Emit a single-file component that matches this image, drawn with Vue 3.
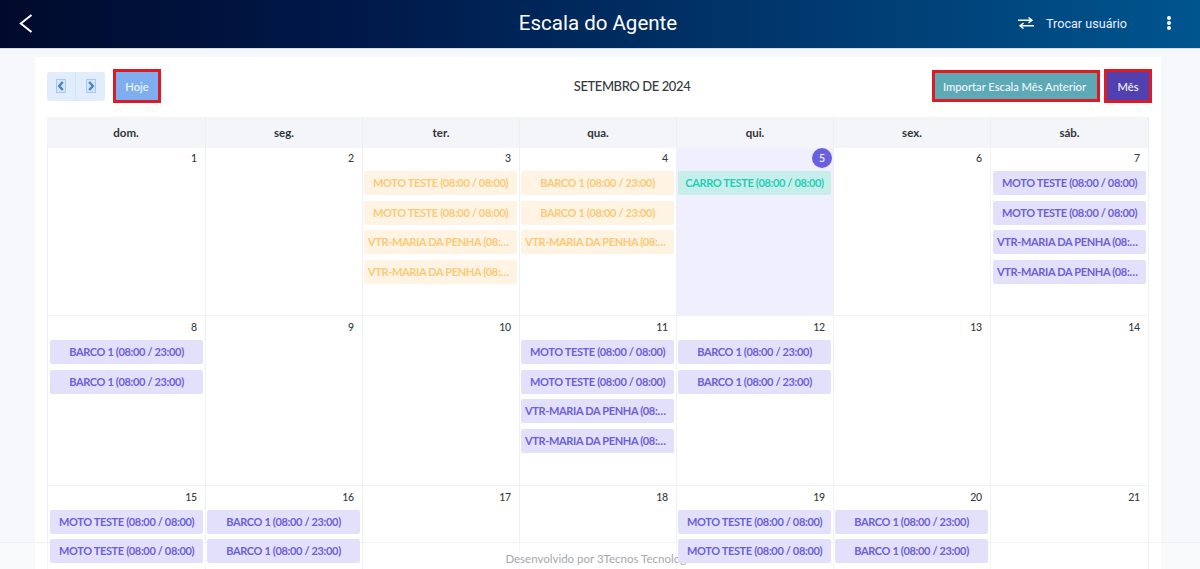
<script setup>
const M = { t: 'MOTO TESTE (08:00 / 08:00)', kind: 'p' }
const B = { t: 'BARCO 1 (08:00 / 23:00)', kind: 'p' }
const V = { t: 'VTR-MARIA DA PENHA (08:00 / 08:00)', kind: 'p' }
const orange = (e) => ({ ...e, kind: 'o' })
const days = ['dom.', 'seg.', 'ter.', 'qua.', 'qui.', 'sex.', 'sáb.']
const events = {
  3: [M, M, V, V].map(orange),
  4: [B, B, V].map(orange),
  5: [{ t: 'CARRO TESTE (08:00 / 08:00)', kind: 'g' }],
  7: [M, M, V, V],
  8: [B, B],
  11: [M, M, V, V],
  12: [B, B],
  15: [M, M, V],
  16: [B, B, V],
  19: [M, M, V],
  20: [B, B, V]
}
const cells = Array.from({ length: 21 }, (_, i) => ({
  n: i + 1,
  today: i + 1 === 5,
  later: i + 1 > 7,
  events: events[i + 1] || []
}))
</script>

<template>
  <div class="page">
    <header class="bar">
      <button class="back" aria-label="Voltar">
        <svg width="16" height="20" viewBox="0 0 16 20"><path d="M13.500 2 2.800 10.500 13.500 19" fill="none" stroke="#fff" stroke-width="2"/></svg>
      </button>
      <h1>Escala do Agente</h1>
      <div class="actions">
        <svg width="16" height="12" viewBox="0 0 16 12"><path d="M0 3.200h13M10.500.5 14 3.200l-3.500 2.700M16 8.800H3M5.500 6.100 2 8.800l3.500 2.700" fill="none" stroke="#fff" stroke-width="1.400"/></svg>
        <span class="swap">Trocar usuário</span>
        <span class="dots"><i></i><i></i><i></i></span>
      </div>
    </header>

    <main class="card">
      <div class="toolbar">
        <div class="left">
          <div class="nav">
            <button aria-label="Anterior">
              <svg width="10" height="14" viewBox="0 0 10 14"><rect x=".5" y=".5" width="9" height="13" fill="#d6e6f9" stroke="#a9c9ef"/><path d="M6.800 3 3.200 7l3.600 4" fill="none" stroke="#4a84cc" stroke-width="2.400"/></svg>
            </button>
            <button aria-label="Próximo">
              <svg width="10" height="14" viewBox="0 0 10 14"><rect x=".5" y=".5" width="9" height="13" fill="#d6e6f9" stroke="#a9c9ef"/><path d="M3.200 3 6.800 7l-3.600 4" fill="none" stroke="#4a84cc" stroke-width="2.400"/></svg>
            </button>
          </div>
          <button class="btn today">Hoje</button>
        </div>
        <div class="title">SETEMBRO DE 2024</div>
        <div class="right">
          <button class="btn import">Importar Escala Mês Anterior</button>
          <button class="btn month">Mês</button>
        </div>
      </div>

      <div class="calendar">
        <div v-for="d in days" :key="d" class="head">{{ d }}</div>
        <div v-for="c in cells" :key="c.n" class="cell" :class="{ now: c.today, later: c.later }">
          <div class="num"><span :class="{ circle: c.today }">{{ c.n }}</span></div>
          <div class="chip" v-for="(e, i) in c.events" :key="i" :class="e.kind">{{ e.t }}</div>
        </div>
      </div>
    </main>

    <footer class="foot">Desenvolvido por 3Tecnos Tecnologia</footer>
  </div>
</template>

<style>
html, body { margin: 0; overflow: hidden; }
</style>

<style scoped>
.page {
  position: relative;
  height: 569px;
  overflow: hidden;
  background: #f6f8fb;
  font-family: Lato, "Open Sans", sans-serif;
}
.bar {
  height: 48px;
  box-sizing: border-box;
  padding: 0 29px 2px 18px;
  display: flex;
  align-items: center;
  justify-content: space-between;
  background: linear-gradient(90deg, #000a2c 0%, #00194a 30%, #00558f 100%);
  position: relative;
  box-shadow: 0 1px 0 #d8dde5;
}
.back { background: none; border: 0; padding: 0; display: flex; }
.bar h1 {
  position: absolute;
  left: 0;
  right: 4px;
  margin: 0;
  text-align: center;
  font: 400 20.500px Roboto, sans-serif;
  color: #fff;
  pointer-events: none;
}
.actions { display: flex; align-items: center; color: #fff; }
.swap { font: 400 12.600px Roboto, sans-serif; margin: 0 40px 0 12px; color: #e8eefc; }
.dots { display: flex; flex-direction: column; gap: 1px; }
.dots i { width: 4px; height: 4px; border-radius: 50%; background: #fff; display: block; }

.card {
  margin: 9px 39px 0 35px;
  padding: 12px 12px 0;
  background: #fff;
}
.toolbar {
  display: grid;
  grid-template-columns: 1fr auto 1fr;
  align-items: center;
  height: 34px;
  margin-bottom: 14px;
}
.left, .right { display: flex; align-items: center; }
.right { justify-content: flex-end; margin-right: -3px; }
.nav { display: flex; margin-right: 8px; }
.nav button {
  width: 29px;
  height: 29px;
  border: 0;
  border-right: 1px solid #d6e4f7;
  background: #e1edfb;
  padding: 0;
  display: flex;
  align-items: center;
  justify-content: center;
}
.nav button:first-child { border-radius: 3px 0 0 3px; }
.nav button:last-child { border-right: 0; border-radius: 0 3px 3px 0; }
.btn {
  font: 500 11.200px Lato, sans-serif;
  color: #f1f6fb;
  height: 34px;
  border: 3px solid #dc1c24;
  padding: 0;
  box-sizing: border-box;
}
.today { width: 48px; background: #7eaef0; }
.import { width: 168px; height: 32px; padding-right: 3px; background: #5da9b5; margin-right: 4px; }
.month { width: 48px; background: #5340b0; }
.title {
  padding-left: 68px;
  font: 500 13px Lato, sans-serif;
  letter-spacing: -.4px;
  color: #343a40;
}
.calendar {
  display: grid;
  grid-template-columns: 159px repeat(5, 157px) 1fr;
  grid-template-rows: 31px 168px 169.500px 169.500px;
}
.head {
  display: flex;
  align-items: center;
  justify-content: center;
  background: #f3f5f8;
  border-right: 1px solid #eceff3;
  font: 700 11.500px Lato, sans-serif;
  color: #30343a;
}
.cell {
  box-sizing: border-box;
  min-width: 0;
  padding: 0 2px 0 1px;
  border-right: 1px solid #eff1f4;
  border-bottom: 1px solid #eff1f4;
}
.cell:nth-child(7n + 1) { padding-left: 2px; border-left: 1px solid #eff1f4; }
.cell:nth-child(7n) { padding-left: 2px; }
.cell.later { padding-top: 1px; }
.cell.now { background: #f0effd; }
.num {
  height: 20px;
  margin-bottom: 3px;
  display: flex;
  align-items: center;
  justify-content: flex-end;
  padding-right: 6px;
  font: 500 10.500px Lato, sans-serif;
  letter-spacing: -.2px;
  color: #343a40;
}
.circle {
  width: 20px;
  height: 20px;
  margin-right: -7px;
  border-radius: 50%;
  background: #6a5fe0;
  color: #fff;
  display: flex;
  align-items: center;
  justify-content: center;
}
.chip {
  position: relative;
  z-index: 2;
  height: 24px;
  line-height: 24px;
  margin-bottom: 5.500px;
  padding: 0 4px;
  border-radius: 2px;
  text-align: center;
  white-space: nowrap;
  overflow: hidden;
  text-overflow: ellipsis;
  font-size: 11px;
  letter-spacing: -.35px;
  font-weight: 700;
}
.chip.p { background: #e3e0fb; color: #6d5fd8; }
.chip.o { background: #fff4e3; color: #fbc977; }
.chip.g { background: #c8eeec; color: #1fcfb4; }
.foot {
  position: absolute;
  left: 0;
  right: 0;
  bottom: 0;
  height: 26px;
  z-index: 1;
  pointer-events: none;
  border-top: 1px solid rgba(230, 233, 238, .6);
  background: rgba(255, 255, 255, .35);
  text-align: center;
  font: 400 11.500px/32px Lato, sans-serif;
  color: #a4a8ae;
}
</style>
